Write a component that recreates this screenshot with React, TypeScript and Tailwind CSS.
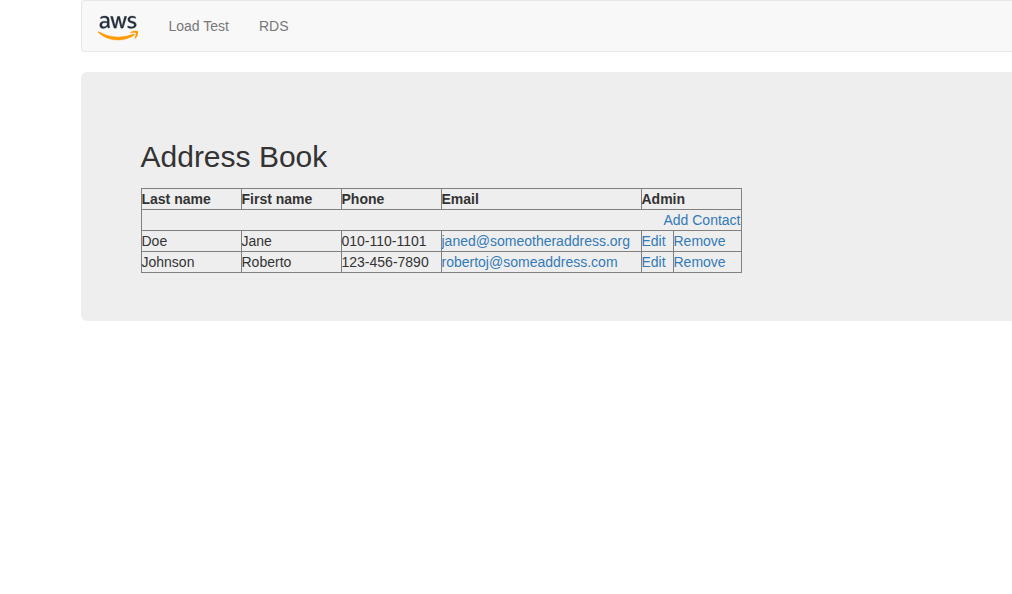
import { FaAws } from "react-icons/fa";

const contacts = [
  { last: "Doe", first: "Jane", phone: "010-110-1101", email: "janed@someotheraddress.org" },
  { last: "Johnson", first: "Roberto", phone: "123-456-7890", email: "robertoj@someaddress.com" },
];

const cell = "h-[21px] border border-[#808080] p-0 text-left indent-[-0.5px] whitespace-nowrap";

function Logo() {
  return (
    <a href="#" aria-label="aws" className="mt-[4px] -ml-[0.5px] block w-[40.5px]">
      <span className="block h-[18px] overflow-hidden">
        <FaAws className="h-8 w-10 stroke-[#252f3e] stroke-[4px] text-[#252f3e]" />
      </span>
      <span className="block h-[14px] overflow-hidden">
        <FaAws className="-mt-[18px] h-8 w-10 stroke-[#ff9900] stroke-[8px] text-[#ff9900]" />
      </span>
    </a>
  );
}

function Link({ children }: { children: string }) {
  return (
    <a href="#" className="text-[#337ab7]">
      {children}
    </a>
  );
}

export default function App() {
  return (
    <div className="h-[594px] overflow-hidden bg-white pl-[81px] font-['Liberation_Sans',Arial,sans-serif] text-[14px] leading-5 text-[#333333]">
      <nav className="flex h-[52px] items-center rounded-l border border-r-0 border-[#e7e7e7] bg-[#f8f8f8] pl-4">
        <Logo />
        <div className="ml-[30.5px] flex gap-[30px] text-[#777777]">
          <a href="#">Load Test</a>
          <a href="#">RDS</a>
        </div>
      </nav>
      <main className="mt-5 h-[249px] rounded-l-md bg-[#eeeeee] pt-[68px] pl-[60px]">
        <h2 className="mb-[15px] indent-[-0.5px] text-[30px] leading-[33px]">Address Book</h2>
        <table className="w-[601px] table-fixed border-collapse">
          <colgroup>
            <col className="w-[100px]" />
            <col className="w-[100px]" />
            <col className="w-[100px]" />
            <col className="w-[200px]" />
            <col className="w-[32px]" />
            <col className="w-[68px]" />
          </colgroup>
          <tbody>
            <tr>
              <th className={cell}>Last name</th>
              <th className={cell}>First name</th>
              <th className={cell}>Phone</th>
              <th className={cell}>Email</th>
              <th className={cell} colSpan={2}>Admin</th>
            </tr>
            <tr>
              <td className="h-[21px] border border-[#808080] p-0 pr-[0.5px] text-right" colSpan={6}>
                <Link>Add Contact</Link>
              </td>
            </tr>
            {contacts.map((c) => (
              <tr key={c.email}>
                <td className={cell}>{c.last}</td>
                <td className={cell}>{c.first}</td>
                <td className={cell}>{c.phone}</td>
                <td className={cell}><Link>{c.email}</Link></td>
                <td className={cell}><Link>Edit</Link></td>
                <td className={cell}><Link>Remove</Link></td>
              </tr>
            ))}
          </tbody>
        </table>
      </main>
    </div>
  );
}
